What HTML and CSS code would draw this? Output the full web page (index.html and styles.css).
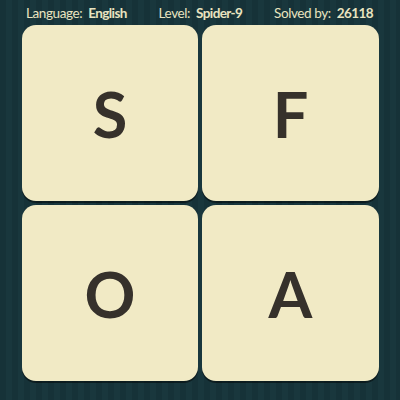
FILE: index.html
```html
<!DOCTYPE html>
<html>
<head>
<meta charset="utf-8">
<link rel="stylesheet" href="styles.css">
</head>
<body>
<div class="page">
  <div class="header">
    <span class="item">Language: <b>English</b></span>
    <span class="item">Level: <b>Spider-9</b></span>
    <span class="item">Solved by: <b>26118</b></span>
  </div>
  <div class="grid">
    <div class="tile">S</div>
    <div class="tile">F</div>
    <div class="tile">O</div>
    <div class="tile">A</div>
  </div>
</div>
</body>
</html>
```
FILE: styles.css
```css
html, body {
  margin: 0;
  padding: 0;
}
.page {
  width: 400px;
  height: 400px;
  overflow: hidden;
  background-color: #163238;
  background-image: repeating-linear-gradient(90deg, #163238 0px, #163238 6px, #19373d 6px, #19373d 12px);
  font-family: Lato, "Open Sans", sans-serif;
}
.header {
  height: 25px;
  display: flex;
  align-items: center;
  justify-content: space-between;
  padding: 0 27px 0 26px;
  color: #e9e4c0;
  font-size: 13.5px;
  letter-spacing: -0.4px;
  box-sizing: border-box;
}
.header b {
  font-weight: 700;
  margin-left: 3px;
  letter-spacing: -0.6px;
}
.grid {
  display: grid;
  grid-template-columns: 176px 177px;
  grid-template-rows: 176px 176px;
  gap: 4px;
  padding-left: 22px;
}
.tile {
  background: #f1eac5;
  border-radius: 14px;
  box-shadow: 0 2px 0 rgba(0, 0, 0, 0.45);
  display: flex;
  align-items: center;
  justify-content: center;
  color: #36312b;
  font-size: 63px;
  font-weight: 700;
}
```
